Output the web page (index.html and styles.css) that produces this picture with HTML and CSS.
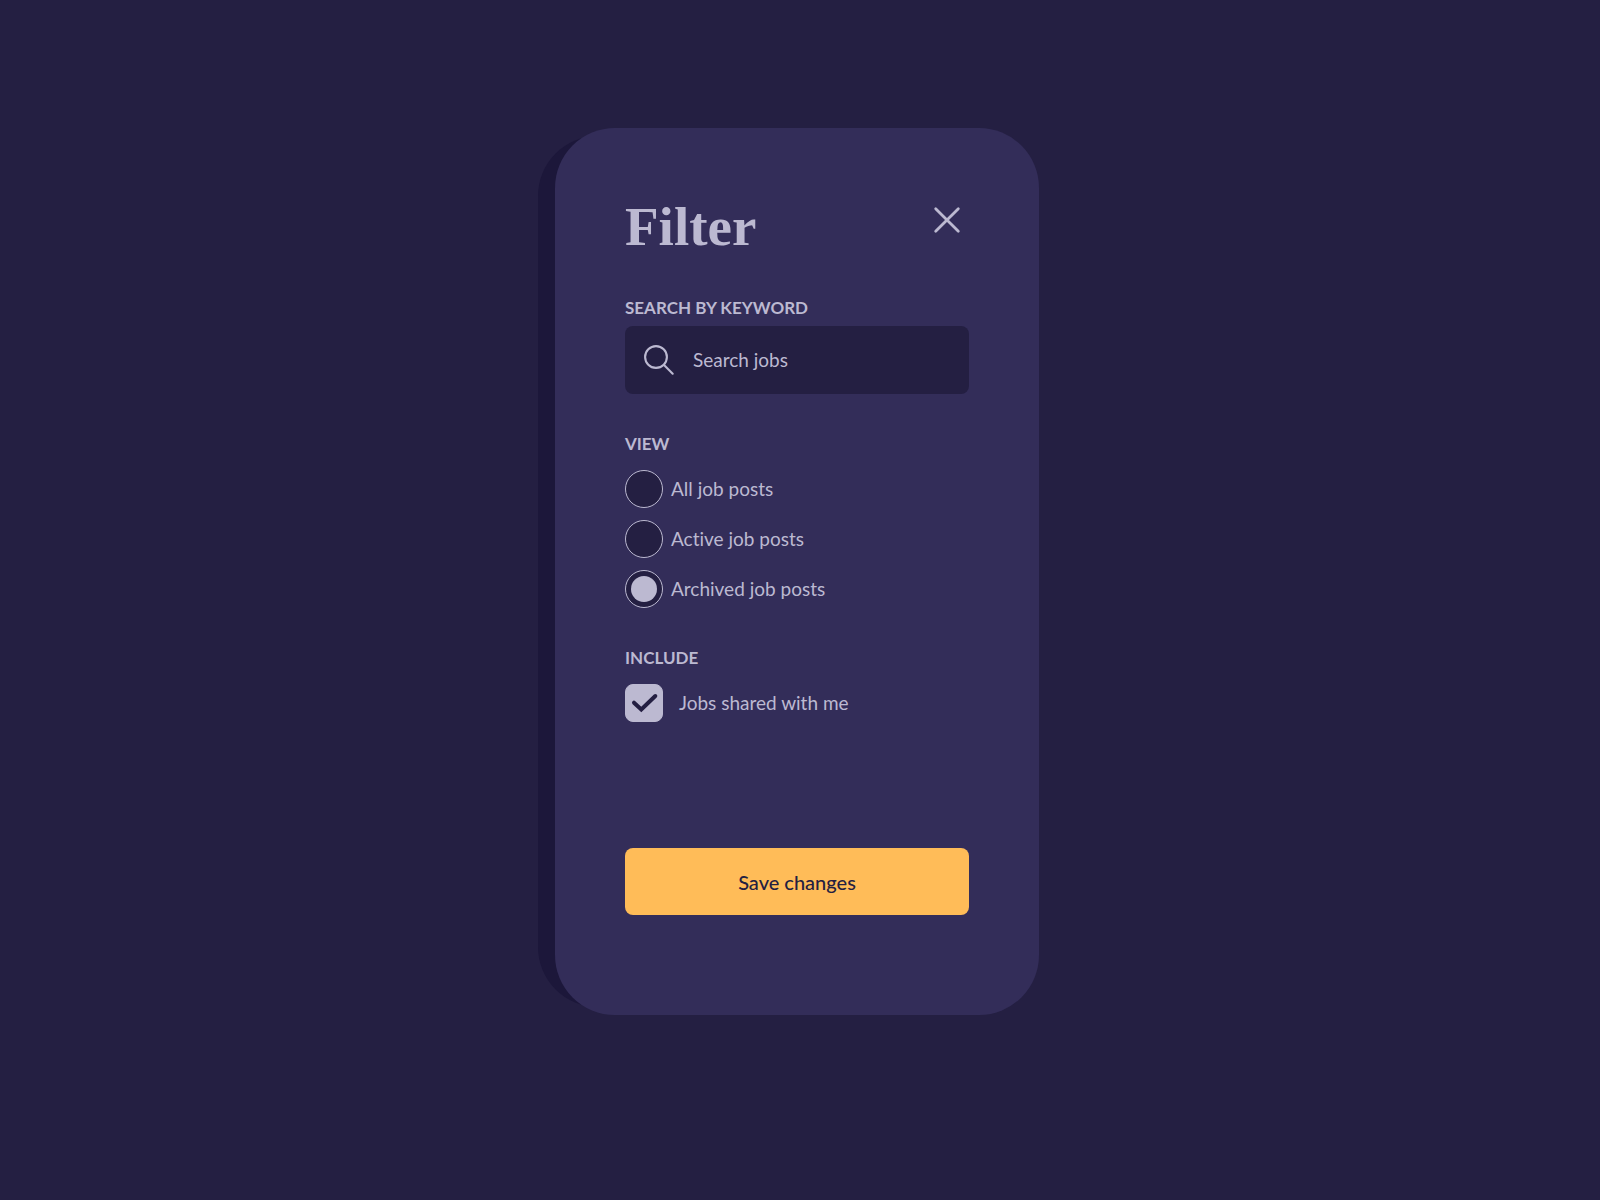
FILE: index.html
```html
<!DOCTYPE html>
<html lang="en">
<head>
  <meta charset="utf-8">
  <meta name="viewport" content="width=device-width, initial-scale=1">
  <title>Filter</title>
  <link rel="stylesheet" href="styles.css">
</head>
<body>
  <main class="page">
    <form class="card">
      <header class="card-header">
        <h1 class="title">Filter</h1>
        <button class="close" type="button" aria-label="Close">
          <svg width="28" height="28" viewBox="0 0 28 28" fill="none" stroke="currentColor" stroke-width="2.8" stroke-linecap="round" aria-hidden="true">
            <path d="M2.7 2.7 25.3 25.3M25.3 2.7 2.7 25.3"/>
          </svg>
        </button>
      </header>

      <div class="group group-search">
        <label class="caption" for="keyword">SEARCH BY KEYWORD</label>
        <div class="search">
          <svg class="search-icon" width="32" height="32" viewBox="0 0 32 32" fill="none" stroke="currentColor" stroke-width="2.1" stroke-linecap="round" aria-hidden="true">
            <circle cx="13" cy="13" r="10.9"/>
            <path d="M21 21 29.7 29.7"/>
          </svg>
          <input class="search-input" id="keyword" type="text" placeholder="Search jobs">
        </div>
      </div>

      <fieldset class="group">
        <legend class="caption">VIEW</legend>
        <div class="options">
          <label class="option"><input class="radio" type="radio" name="view">All job posts</label>
          <label class="option"><input class="radio" type="radio" name="view">Active job posts</label>
          <label class="option"><input class="radio" type="radio" name="view" checked>Archived job posts</label>
        </div>
      </fieldset>

      <fieldset class="group">
        <legend class="caption">INCLUDE</legend>
        <label class="option option-check">
          <span class="check">
            <input class="checkbox" type="checkbox" checked>
            <svg class="tick" width="38" height="38" viewBox="0 0 38 38" fill="none" stroke="currentColor" stroke-width="4" stroke-linecap="round" aria-hidden="true">
              <path d="M9 18.7 16.3 25.5 30.3 12"/>
            </svg>
          </span>
          Jobs shared with me
        </label>
      </fieldset>

      <button class="save" type="submit">Save changes</button>
    </form>
  </main>
</body>
</html>
```
FILE: styles.css
```css
:root {
  --night: #241f42;
  --panel: #332d59;
  --shade: #1c173a;
  --mist: #bcb9d1;
  --amber: #ffbc58;
}

* {
  box-sizing: border-box;
}

body {
  margin: 0;
  background: var(--night);
  color: var(--mist);
  font-family: Lato, "Liberation Sans", sans-serif;
  font-size: 19px;
  font-variant-ligatures: none;
  line-height: 24px;
}

.page {
  display: flex;
  justify-content: center;
  align-items: flex-start;
  min-height: 100vh;
  padding: 128px 22px 64px 16px;
  isolation: isolate;
}

.card {
  position: relative;
  display: flex;
  flex-direction: column;
  width: 100%;
  max-width: 484px;
  padding: 70px 70px 100px;
  border-radius: 60px;
  background: var(--panel);
}

.card::before {
  content: "";
  position: absolute;
  z-index: -1;
  inset: 8px 17px 8px -17px;
  border-radius: 60px;
  background: var(--shade);
}

.card-header {
  display: flex;
  justify-content: space-between;
  align-items: flex-start;
  margin-bottom: 42px;
}

.title {
  margin: 0;
  font-family: "Liberation Serif", serif;
  font-size: 55px;
  font-weight: 700;
  line-height: 58px;
}

.close {
  display: grid;
  place-items: center;
  width: 44px;
  height: 44px;
  padding: 0;
  border: 0;
  background: none;
  color: inherit;
  cursor: pointer;
}

.group {
  min-width: 0;
  margin: 0 0 40px;
  padding: 0;
  border: 0;
}

.caption {
  display: block;
  margin-bottom: 16px;
  padding: 0;
  font-size: 17px;
  font-weight: 700;
  line-height: 20px;
}

.group-search .caption {
  margin-bottom: 8px;
}

.search {
  display: flex;
  align-items: center;
  gap: 18px;
  height: 68px;
  padding: 0 18px;
  border-radius: 8px;
  background: var(--night);
}

.search-icon {
  flex: none;
}

.search-input {
  flex: 1;
  min-width: 0;
  padding: 0;
  border: 0;
  outline: 0;
  background: none;
  color: inherit;
  font: inherit;
}

.search-input::placeholder {
  color: inherit;
  opacity: 1;
}

.options {
  display: grid;
  gap: 12px;
}

.option {
  display: flex;
  align-items: center;
  gap: 8px;
}

.option-check {
  gap: 16px;
}

.radio,
.checkbox {
  flex: none;
  appearance: none;
  width: 38px;
  height: 38px;
  margin: 0;
  border: 1px solid var(--mist);
  background: var(--night);
}

.radio {
  display: grid;
  place-items: center;
  border-radius: 50%;
}

.radio:checked::before {
  content: "";
  width: 26px;
  height: 26px;
  border-radius: 50%;
  background: var(--mist);
}

.check {
  display: grid;
  flex: none;
}

.check > * {
  grid-area: 1 / 1;
}

.checkbox {
  border-radius: 8px;
}

.checkbox:checked {
  background: var(--mist);
}

.tick {
  color: var(--night);
  pointer-events: none;
  visibility: hidden;
}

.checkbox:checked + .tick {
  visibility: visible;
}

.save {
  height: 67px;
  margin-top: 86px;
  padding: 0;
  border: 0;
  border-radius: 8px;
  background: var(--amber);
  color: var(--night);
  font: inherit;
  font-size: 20px;
  font-weight: 500;
  cursor: pointer;
}
```
